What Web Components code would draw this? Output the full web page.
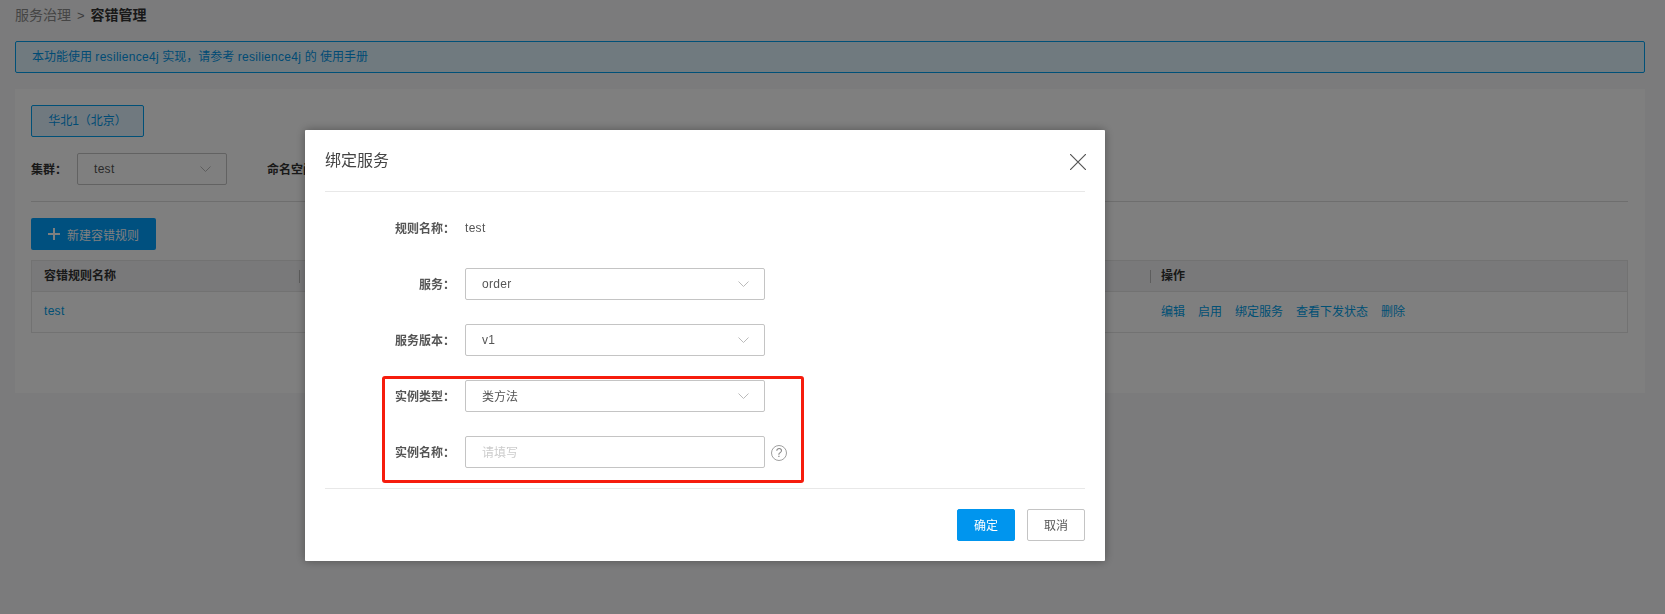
<!DOCTYPE html>
<html lang="zh">
<head>
<meta charset="utf-8">
<title>容错管理</title>
<style>
  html, body { margin: 0; height: 100%; }
  body {
    background: #f7f7f9;
    font: 12px "Liberation Sans", "Noto Sans CJK SC", sans-serif;
    color: #666;
    overflow: hidden;
  }
  .en { letter-spacing: .3px; }
  .cn { margin-bottom: 2px; }
</style>
</head>
<body>
<fault-page>
  <bread-crumb parent="服务治理" current="容错管理"></bread-crumb>
  <info-notice>本功能使用 <span class="en">resilience4j</span> 实现，请参考 <span class="en">resilience4j</span> 的 使用手册</info-notice>
  <main-card>
    <region-tab>华北1（北京）</region-tab>
    <filter-row></filter-row>
    <hr-line></hr-line>
    <add-button>新建容错规则</add-button>
    <rule-table></rule-table>
  </main-card>
</fault-page>

<bind-dialog>
  <form-field label="规则名称："><span class="en">test</span></form-field>
  <form-field label="服务："><select-box><span class="en">order</span></select-box></form-field>
  <form-field label="服务版本："><select-box><span class="en">v1</span></select-box></form-field>
  <form-field label="实例类型："><select-box><span class="cn">类方法</span></select-box></form-field>
  <form-field label="实例名称："><text-box placeholder="请填写"></text-box><help-mark></help-mark></form-field>
</bind-dialog>

<script>
const CHEVRON = `<svg width="11" height="6" viewBox="0 0 11 6"><polyline points="0.5,0.5 5.5,5.5 10.5,0.5" fill="none" stroke="#bbb"/></svg>`;

function shadow(el, html) {
  el.attachShadow({ mode: 'open' }).innerHTML = html;
}

class FaultPage extends HTMLElement {
  constructor() {
    super();
    shadow(this, `<style>:host{display:block;padding:0 20px 0 15px;}</style><slot></slot>`);
  }
}

class BreadCrumb extends HTMLElement {
  connectedCallback() {
    shadow(this, `
      <style>
        :host{display:block;height:30px;line-height:30px;font-size:14px;color:#8a8a8a;}
        b{color:#333;font-weight:700;}
        i{font-style:normal;margin:0 6px;font-size:13px;color:#777;}
      </style>
      ${this.getAttribute('parent')}<i>&gt;</i><b>${this.getAttribute('current')}</b>`);
  }
}

class InfoNotice extends HTMLElement {
  constructor() {
    super();
    shadow(this, `
      <style>
        :host{display:block;box-sizing:border-box;height:32px;line-height:30px;margin-top:11px;
          padding:0 16px;border:1px solid #00a0f0;border-radius:2px;background:#e1f5ff;color:#0097ea;}
      </style><slot></slot>`);
  }
}

class MainCard extends HTMLElement {
  constructor() {
    super();
    shadow(this, `
      <style>:host{display:block;box-sizing:border-box;height:304px;margin-top:16px;padding:16px 17px 16px 16px;background:#fff;}</style>
      <slot></slot>`);
  }
}

class RegionTab extends HTMLElement {
  constructor() {
    super();
    shadow(this, `
      <style>
        :host{display:block;box-sizing:border-box;width:113px;height:32px;line-height:30px;text-align:center;
          border:1px solid #00a0f0;border-radius:2px;background:#e1f3ff;color:#0097ea;}
      </style><slot></slot>`);
  }
}

class SelectBox extends HTMLElement {
  constructor() {
    super();
    shadow(this, `
      <style>
        :host{display:flex;align-items:center;justify-content:space-between;box-sizing:border-box;
          width:var(--select-width,300px);height:32px;padding:0 15px 0 16px;
          border:1px solid #c4c4c4;border-radius:2px;background:#fff;color:#555;}
      </style><slot></slot>${CHEVRON}`);
  }
}

class FilterRow extends HTMLElement {
  connectedCallback() {
    shadow(this, `
      <style>
        :host{display:flex;align-items:center;margin-top:16px;--select-width:150px;color:#333;}
        b{font-weight:700;margin:0 10px 2px 0;}
        select-box{margin-right:40px;}
        span{letter-spacing:.3px;}
      </style>
      <b>集群：</b><select-box><span>test</span></select-box><b>命名空间：</b>`);
  }
}

class HrLine extends HTMLElement {
  constructor() {
    super();
    shadow(this, `<style>:host{display:block;height:1px;margin:16px 0;background:#ddd;}</style>`);
  }
}

class AddButton extends HTMLElement {
  constructor() {
    super();
    shadow(this, `
      <style>
        :host{display:flex;align-items:center;gap:7px;box-sizing:border-box;width:125px;height:32px;
          padding-left:17px;border-radius:2px;background:#00a0ff;color:#fff;}
      </style>
      <svg width="12" height="12" viewBox="0 0 12 12"><path d="M6 0v12M0 6h12" stroke="#fff" stroke-width="2"/></svg>
      <slot></slot>`);
  }
}

class RuleTable extends HTMLElement {
  connectedCallback() {
    const links = ['编辑', '启用', '绑定服务', '查看下发状态', '删除'].map(t => `<a>${t}</a>`).join('');
    shadow(this, `
      <style>
        :host{display:block;margin-top:10px;border:1px solid #e4e4e4;color:#555;}
        .row{display:grid;grid-template-columns:267px 1fr 477px;align-items:center;}
        .head{height:30px;background:#f2f2f5;border-bottom:1px solid #e4e4e4;font-weight:700;color:#333;}
        .head div{height:13px;line-height:13px;padding-left:12px;border-left:1px solid #bbb;}
        .head div:first-child{border-left:0;}
        .head div:last-child{padding-left:10px;}
        .body{height:40px;}
        .body div{padding:0 0 3px 12px;}
        a{color:#00a0ea;margin-right:13px;}
        .name{letter-spacing:.3px;}
        .body .ops{padding-left:11px;}
      </style>
      <div class="row head"><div>容错规则名称</div><div></div><div>操作</div></div>
      <div class="row body"><div><a class="name">test</a></div><div></div><div class="ops">${links}</div></div>`);
  }
}

class FormField extends HTMLElement {
  connectedCallback() {
    shadow(this, `
      <style>
        :host{display:flex;align-items:center;height:32px;color:#555;}
        label{width:130px;margin:0 10px 2px 0;text-align:right;font-weight:700;color:#555;}
      </style>
      <label>${this.getAttribute('label')}</label><slot></slot>`);
  }
}

class TextBox extends HTMLElement {
  connectedCallback() {
    shadow(this, `
      <style>
        :host{display:flex;align-items:center;box-sizing:border-box;width:300px;height:32px;padding:0 0 2px 16px;
          border:1px solid #c4c4c4;border-radius:2px;color:#ccc;}
      </style>${this.getAttribute('placeholder')}`);
  }
}

class HelpMark extends HTMLElement {
  constructor() {
    super();
    shadow(this, `
      <style>
        :host{display:flex;align-items:center;justify-content:center;box-sizing:border-box;width:16px;height:16px;
          margin:2px 0 0 6px;border:1.5px solid #a0a0a0;border-radius:50%;font-size:12px;line-height:1;color:#888;}
      </style>?`);
  }
}

class BindDialog extends HTMLElement {
  constructor() {
    super();
    shadow(this, `
      <style>
        :host{position:fixed;inset:0;background:rgba(0,0,0,.5);}
        .modal{position:absolute;left:305px;top:130px;box-sizing:border-box;width:800px;height:431px;
          padding:0 20px;background:#fff;border-radius:1px;box-shadow:0 0 10px rgba(0,0,0,.35);}
        header{display:flex;align-items:center;justify-content:space-between;height:61px;border-bottom:1px solid #e8e8e8;
          font-size:16px;color:#444;}
        header span{margin-bottom:3px;}
        header svg{margin:3px -1px 0 0;}
        .fields{display:flex;flex-direction:column;gap:24px;height:297px;box-sizing:border-box;padding-top:20px;
          border-bottom:1px solid #e8e8e8;}
        footer{display:flex;justify-content:flex-end;gap:12px;padding-top:20px;}
        button{box-sizing:border-box;width:58px;height:32px;padding:0 0 2px;border:1px solid #c4c4c4;border-radius:2px;
          background:#fff;color:#555;font:inherit;}
        button.ok{border-color:#0095ee;background:#0095ee;color:#fff;}
        .mark{position:absolute;left:77px;top:246px;box-sizing:border-box;width:422px;height:107px;
          border:3px solid #f61c0d;border-radius:3px;pointer-events:none;}
      </style>
      <div class="modal">
        <header><span>绑定服务</span>
          <svg width="16" height="16" viewBox="0 0 16 16"><path d="M0 0L16 16M16 0L0 16" stroke="#555" stroke-width="1.2"/></svg>
        </header>
        <div class="fields"><slot></slot></div>
        <footer><button class="ok">确定</button><button>取消</button></footer>
        <div class="mark"></div>
      </div>`);
  }
}

customElements.define('fault-page', FaultPage);
customElements.define('bread-crumb', BreadCrumb);
customElements.define('info-notice', InfoNotice);
customElements.define('main-card', MainCard);
customElements.define('region-tab', RegionTab);
customElements.define('select-box', SelectBox);
customElements.define('filter-row', FilterRow);
customElements.define('hr-line', HrLine);
customElements.define('add-button', AddButton);
customElements.define('rule-table', RuleTable);
customElements.define('form-field', FormField);
customElements.define('text-box', TextBox);
customElements.define('help-mark', HelpMark);
customElements.define('bind-dialog', BindDialog);
</script>
</body>
</html>
